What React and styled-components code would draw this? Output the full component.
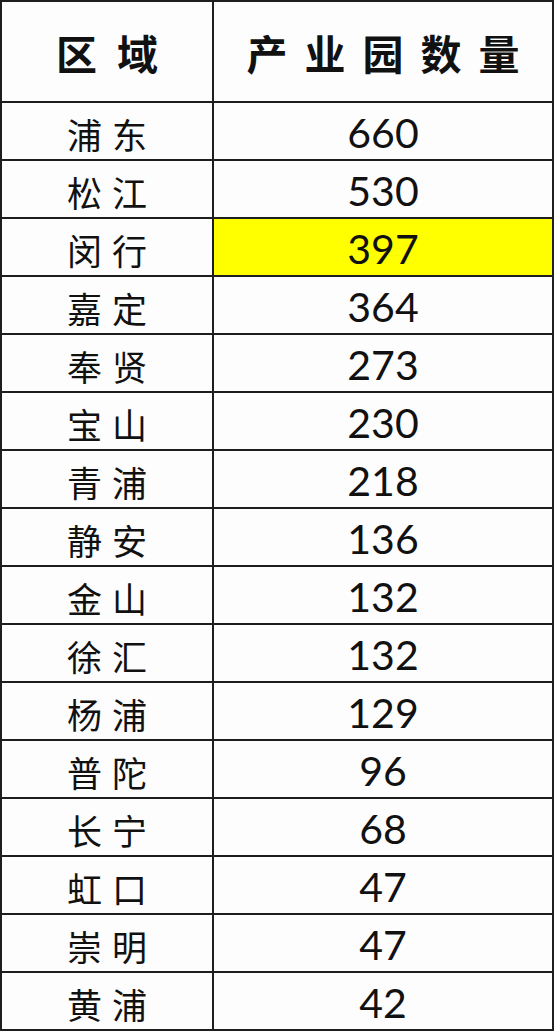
import React from 'react'
import styled, { createGlobalStyle } from 'styled-components'

const GlobalStyle = createGlobalStyle`
   html, body {
      margin: 0;
      padding: 0;
      background: #fdfdfd;
   }
`

const rows = [
   ['浦东', 660],
   ['松江', 530],
   ['闵行', 397, true],
   ['嘉定', 364],
   ['奉贤', 273],
   ['宝山', 230],
   ['青浦', 218],
   ['静安', 136],
   ['金山', 132],
   ['徐汇', 132],
   ['杨浦', 129],
   ['普陀', 96],
   ['长宁', 68],
   ['虹口', 47],
   ['崇明', 47],
   ['黄浦', 42]
]

const Table = styled.table`
   width: 554px;
   border-collapse: collapse;
   table-layout: fixed;
   background: #fdfdfd;
   color: #111;

   td,
   th {
      border: 2px solid #1e1e1e;
      padding: 0;
      text-align: center;
   }
`

const HeadCell = styled.th`
   height: 97px;
   padding-top: 2px !important;
   font-family: 'Noto Sans CJK SC', sans-serif;
   font-weight: 700;
   font-size: 41px;
   letter-spacing: ${p => p.$spacing}px;
   text-indent: ${p => p.$spacing}px;
   line-height: 1;
`

const NameCell = styled.td`
   height: 52px;
   padding-top: 4px !important;
   font-family: 'Noto Sans CJK SC', sans-serif;
   font-weight: 400;
   font-size: 35px;
   letter-spacing: 10px;
   text-indent: 10px;
   line-height: 1;
`

const CountCell = styled.td`
   height: 53px;
   padding-top: 3px !important;
   font-family: 'Lato', 'Noto Sans', sans-serif;
   font-size: 41px;
   line-height: 1;
   background: ${p => (p.$highlight ? '#ffff00' : 'transparent')};
`

export default function App() {
   return (
      <>
         <GlobalStyle />
         <Table>
            <colgroup>
               <col style={{ width: 212 }} />
               <col />
            </colgroup>
            <thead>
               <tr>
                  <HeadCell $spacing={20}>区域</HeadCell>
                  <HeadCell $spacing={17}>产业园数量</HeadCell>
               </tr>
            </thead>
            <tbody>
               {rows.map(([name, count, hl]) => (
                  <tr key={name}>
                     <NameCell>{name}</NameCell>
                     <CountCell $highlight={hl}>{count}</CountCell>
                  </tr>
               ))}
            </tbody>
         </Table>
      </>
   )
}
